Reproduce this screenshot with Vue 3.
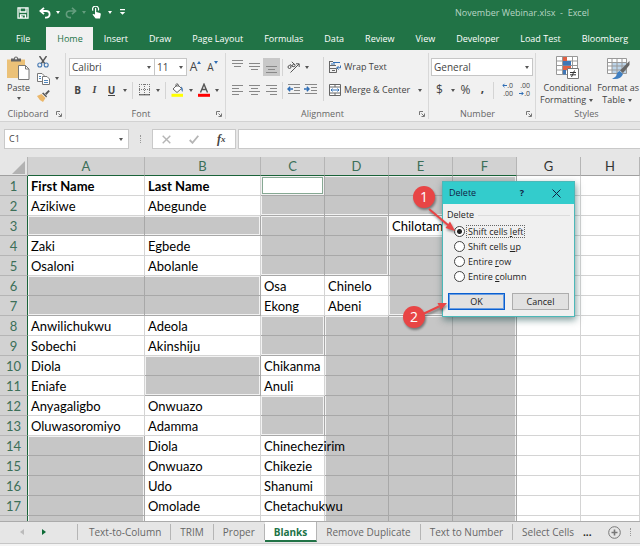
<script setup>
import { ref } from 'vue';

// ---------------------------------------
// ribbon

const tabs = ['File', 'Home', 'Insert', 'Draw', 'Page Layout', 'Formulas', 'Data', 'Review', 'View', 'Developer', 'Load Test', 'Bloomberg']
const activeTab = ref('Home')

const alignTop = [
  { name: 'Top Align', d: 'M0 1.5H11M0 4.5H11M2 7.5H9', cls: 'up' },
  { name: 'Middle Align', d: 'M0 3.5H11M0 6.5H11M2 9.5H9', cls: '' },
  { name: 'Bottom Align', d: 'M0 6.5H11M2 9.5H9M0 12.5H11', cls: 'pressed' },
]
const alignText = [
  { name: 'Align Left', d: 'M0 2.5H11M0 5.5H7M0 8.5H11M0 11.5H7' },
  { name: 'Center', d: 'M0 2.5H11M2 5.5H9M0 8.5H11M2 11.5H9' },
  { name: 'Align Right', d: 'M0 2.5H11M4 5.5H11M0 8.5H11M4 11.5H11' },
]

const fontName = ref('Calibri')
const fontSize = ref('11')
const numberFormat = ref('General')
const nameBox = ref('C1')
const formula = ref('')

// ---------------------------------------
// sheet

const columns = ['A', 'B', 'C', 'D', 'E', 'F', 'G', 'H']

const rows = [
  ['First Name', 'Last Name'],
  ['Azikiwe', 'Abegunde'],
  ['', '', '', '', 'Chilotam'],
  ['Zaki', 'Egbede'],
  ['Osaloni', 'Abolanle'],
  ['', '', 'Osa', 'Chinelo'],
  ['', '', 'Ekong', 'Abeni'],
  ['Anwilichukwu', 'Adeola'],
  ['Sobechi', 'Akinshiju'],
  ['Diola', '', 'Chikanma'],
  ['Eniafe', '', 'Anuli'],
  ['Anyagaligbo', 'Onwuazo'],
  ['Oluwasoromiyo', 'Adamma'],
  ['', 'Diola', 'Chinechezirim'],
  ['', 'Onwuazo', 'Chikezie'],
  ['', 'Udo', 'Shanumi'],
  ['', 'Omolade', 'Chetachukwu'],
  [],
]

// selected blank areas: first column, first row, last column, last row
const areas = [
  [2, 1, 5, 2],
  [0, 3, 1, 3],
  [2, 3, 3, 5],
  [5, 3, 5, 3],
  [4, 4, 5, 7],
  [0, 6, 1, 7],
  [2, 8, 2, 9],
  [3, 8, 5, 19],
  [1, 10, 1, 11],
  [2, 12, 2, 13],
  [0, 14, 0, 19],
]

const cellClass = (c, r) => {
  const a = areas.find(([c1, r1, c2, r2]) => c >= c1 && c <= c2 && r >= r1 && r <= r2)
  if (!a) return ''
  return {
    sel: true,
    active: c === 2 && r === 1,
    'edge-l': c === a[0],
    'edge-t': r === a[1],
    'edge-r': c === a[2],
    'edge-b': r === a[3],
  }
}

// ---------------------------------------
// delete dialog

const shift = ref('left')
const options = [
  { id: 'left', pre: 'Shift cells ', key: 'l', post: 'eft' },
  { id: 'up', pre: 'Shift cells ', key: 'u', post: 'p' },
  { id: 'row', pre: 'Entire ', key: 'r', post: 'ow' },
  { id: 'column', pre: 'Entire ', key: 'c', post: 'olumn' },
]

const sheets = ['Text-to-Column', 'TRIM', 'Proper', 'Blanks', 'Remove Duplicate', 'Text to Number', 'Select Cells']
const activeSheet = ref('Blanks')
</script>

<template>
  <div class="excel">
    <header class="titlebar">
      <div class="quick">
        <button aria-label="Save">
          <svg width="12" height="12" viewBox="0 0 12 12" fill="none" stroke="#fff"><path d="M1 .8H11V11.2H1ZM3 1V5H9V1M3.5 11V7.8H8.5V11M5 9V11" stroke-width="1.3" /></svg>
        </button>
        <button aria-label="Undo">
          <svg width="12" height="12" viewBox="0 0 12 12" fill="none" stroke="#fff" stroke-width="1.8"><path d="M5 .8L1.4 4L5 7.2M1.6 4H7Q10.6 4 10.6 7.2T7 10.6H6" /></svg>
        </button>
        <i class="arrow light"></i>
        <button class="faded" aria-label="Redo">
          <svg width="12" height="12" viewBox="0 0 12 12" fill="none" stroke="#fff" stroke-width="1.6"><path d="M7 .8L10.6 4L7 7.2M10.4 4H5Q1.4 4 1.4 7.2T5 10.6H6" /></svg>
        </button>
        <i class="arrow light faded"></i>
        <button aria-label="Touch/Mouse Mode">
          <svg width="12" height="13" viewBox="0 0 12 13"><path d="M4 5V2.2Q4.6 1.4 5.2 2.2V6L9 7Q10 7.4 9.8 8.5L9 12.5H4.6L1.5 8.6Q2 7.4 4 8.6Z" fill="#fff" /><path d="M2 4.6A3 3 0 1 1 7.3 4.4" fill="none" stroke="#fff" stroke-width="1.2" /></svg>
        </button>
        <i class="arrow light"></i>
        <button aria-label="Customize Quick Access Toolbar">
          <svg width="7" height="7" viewBox="0 0 7 7" fill="#fff"><path d="M1 0H6V1.2H1ZM.8 3H6.2L3.5 5.8Z" /></svg>
        </button>
      </div>
      <div class="title">November Webinar.xlsx&nbsp; -&nbsp; Excel</div>
    </header>

    <nav class="tabs">
      <button v-for="t in tabs" :key="t" :class="{ on: t === activeTab }" @click="activeTab = t">{{ t }}</button>
    </nav>

    <section class="ribbon">
      <div class="group clipboard">
        <div class="tools">
          <button class="big">
            <svg width="23" height="24" viewBox="0 0 23 24">
              <path d="M0 3.5H18V22H0Z" fill="#ebc178" />
              <path d="M4 5.5V2.5H7Q7 .5 9 .5T11 2.5H14V5.5Z" fill="#646464" /><circle cx="9" cy="2.6" r="1" fill="#f1f1f1" />
              <path d="M11.5 9.5H18.5L22 13V23.5H11.5Z" fill="#fff" stroke="#777" /><path d="M18.5 9.5V13H22" fill="none" stroke="#777" />
            </svg>
            <span>Paste</span>
            <i class="arrow"></i>
          </button>
          <div class="small">
            <button aria-label="Cut">
              <svg width="12" height="12" viewBox="0 0 12 12" fill="none"><path d="M2.5 0L8 8M9.5 0L4 8" stroke="#555" stroke-width="1.4" /><circle cx="2.8" cy="9" r="2" stroke="#4679b2" stroke-width="1.1" /><circle cx="9.2" cy="9" r="2" stroke="#4679b2" stroke-width="1.1" /></svg>
            </button>
            <button aria-label="Copy">
              <svg width="13" height="12" viewBox="0 0 13 12" fill="#fff" stroke="#777"><path d="M.5 .5H5L7 2.5V8.5H.5Z" /><path d="M5.5 3.5H10L12.5 6V11.5H5.5Z" /><path d="M2 3.5H4M2 5.5H4M7 7.5H11M7 9.5H11" stroke="#4f86bd" /></svg>
              <i class="arrow"></i>
            </button>
            <button aria-label="Format Painter">
              <svg width="13" height="12" viewBox="0 0 13 12"><path d="M0 6L4.5 4L8.5 8L6 12Q2 10 0 6Z" fill="#ebb76a" /><path d="M5 3.2L9.3 7.5L10 6.2L6.4 2.5Z" fill="#555" /><path d="M8 3.5L11.5 0L12.8 1.3L9.4 5Z" fill="#555" /></svg>
            </button>
          </div>
        </div>
        <footer><span>Clipboard</span><svg class="launch" width="6" height="6" viewBox="0 0 6 6"><path d="M.5 4V.5H4M2.5 2.5L5 5M5.5 2.5V5.5H2.5" /></svg></footer>
      </div>

      <div class="group font">
        <div class="tools column">
          <div class="line">
            <label class="combo face"><select v-model="fontName" aria-label="Font"><option>Calibri</option></select><i class="arrow"></i></label>
            <label class="combo size"><select v-model="fontSize" aria-label="Font Size"><option>11</option></select><i class="arrow"></i></label>
            <button class="grow" aria-label="Increase Font Size">A<svg width="4" height="3" viewBox="0 0 4 3"><path d="M0 3L2 0L4 3Z" fill="#2f6eb5" /></svg></button>
            <button class="grow less" aria-label="Decrease Font Size">A<svg width="4" height="3" viewBox="0 0 4 3"><path d="M0 0L2 3L4 0Z" fill="#2f6eb5" /></svg></button>
          </div>
          <div class="line">
            <button class="ic"><b>B</b></button>
            <button class="ic"><em>I</em></button>
            <button class="ic"><b class="under">U</b></button>
            <i class="arrow"></i>
            <i class="sep"></i>
            <button class="ic" aria-label="Borders">
              <svg width="12" height="12" viewBox="0 0 12 12" fill="none" stroke="#777"><path d="M.5 0V11M5.5 0V11M10.5 0V11M0 .5H11M0 5.5H11" stroke-dasharray="1 1" /><path d="M0 10.8H11" stroke="#444" /></svg>
            </button>
            <i class="arrow"></i>
            <i class="sep"></i>
            <button class="ic" aria-label="Fill Color">
              <svg width="13" height="14" viewBox="0 0 13 14"><path d="M2 6L6.5 1.5L10.5 5.5L6 9.5Z" fill="#fff" stroke="#666" /><path d="M5 4V1.5Q6 -.5 7 1.5V4" fill="none" stroke="#666" /><path d="M10 3.5Q12.8 5 11.5 9Q10.5 8 10 5.5Z" fill="#4679b2" /><path d="M.5 10.8H12V13.8H.5Z" fill="#ff0" /></svg>
            </button>
            <i class="arrow"></i>
            <button class="ic" aria-label="Font Color">
              <svg width="12" height="14" viewBox="0 0 12 14"><path d="M2.5 9.5L6 1.2L9.5 9.5M3.8 6.5H8.2" fill="none" stroke="#555" stroke-width="1.4" /><path d="M0 10.8H12V13.8H0Z" fill="#f00" /></svg>
            </button>
            <i class="arrow"></i>
          </div>
        </div>
        <footer><span>Font</span><svg class="launch" width="6" height="6" viewBox="0 0 6 6"><path d="M.5 4V.5H4M2.5 2.5L5 5M5.5 2.5V5.5H2.5" /></svg></footer>
      </div>

      <div class="group alignment">
        <div class="tools">
          <div class="column left">
            <div class="line">
              <button v-for="a in alignTop" :key="a.name" class="ic" :class="a.cls" :aria-label="a.name">
                <svg width="11" height="14" viewBox="0 0 11 14"><path :d="a.d" fill="none" stroke="#888" /></svg>
              </button>
              <i class="sep tall"></i>
              <button class="ic" aria-label="Orientation">
                <svg width="13" height="12" viewBox="0 0 13 12" fill="none" stroke="#555"><path d="M3.5 11.5L12 3M9 2.8H12.2V6" /><circle cx="2.5" cy="6" r="1.5" /><path d="M3 3.2L5.8 6M4.8 .8L8 4" /><circle cx="6.8" cy="4.4" r="1.3" /></svg>
              </button>
              <i class="arrow"></i>
            </div>
            <div class="line">
              <button v-for="a in alignText" :key="a.name" class="ic" :aria-label="a.name">
                <svg width="11" height="14" viewBox="0 0 11 14"><path :d="a.d" fill="none" stroke="#888" /></svg>
              </button>
              <i class="sep tall"></i>
              <button class="ic" aria-label="Decrease Indent">
                <svg width="13" height="12" viewBox="0 0 13 12" fill="none" stroke="#888"><path d="M1 .5H13M7 3.5H13M7 6.5H13M1 9.5H13" /><path d="M1 5H6M3.2 2.8L1 5L3.2 7.2" stroke="#2f6eb5" stroke-width="1.4" /></svg>
              </button>
              <button class="ic" aria-label="Increase Indent">
                <svg width="13" height="12" viewBox="0 0 13 12" fill="none" stroke="#888"><path d="M1 .5H13M7 3.5H13M7 6.5H13M1 9.5H13" /><path d="M0 5H5M2.8 2.8L5 5L2.8 7.2" stroke="#2f6eb5" stroke-width="1.4" /></svg>
              </button>
            </div>
          </div>
          <i class="sep full"></i>
          <div class="column right">
            <button class="text">
              <svg width="13" height="12" viewBox="0 0 13 12" fill="none" stroke="#666"><path d="M.5 0V12M.5 .5H4M.5 4.5H7M.5 7.5H7.5V11.5H.5M3 9.5H6" /><path d="M4 1.5H11M2 3H6M11.5 4.5V6.8H8M9.6 5L7.8 6.8L9.6 8.6" stroke="#2f6eb5" /></svg>
              <span>Wrap Text</span>
            </button>
            <button class="text">
              <svg width="13" height="12" viewBox="0 0 13 12" fill="#fff" stroke="#666"><path d="M.5 .5H11.5V11.5H.5ZM.5 3H11.5M.5 9H11.5M6 .5V3M6 9V11.5" /><path d="M2 6H10M3.5 4.5L2 6L3.5 7.5M8.5 4.5L10 6L8.5 7.5" fill="none" stroke="#2f6eb5" /></svg>
              <span>Merge &amp; Center</span>
              <i class="arrow"></i>
            </button>
          </div>
        </div>
        <footer><span>Alignment</span><svg class="launch" width="6" height="6" viewBox="0 0 6 6"><path d="M.5 4V.5H4M2.5 2.5L5 5M5.5 2.5V5.5H2.5" /></svg></footer>
      </div>

      <div class="group number">
        <div class="tools column">
          <div class="line">
            <label class="combo format"><select v-model="numberFormat" aria-label="Number Format"><option>General</option></select><i class="arrow"></i></label>
          </div>
          <div class="line">
            <button class="ic sign">$</button>
            <i class="arrow"></i>
            <button class="ic sign">%</button>
            <button class="ic comma">,</button>
            <i class="sep tall"></i>
            <button class="ic dec" aria-label="Increase Decimal"><span><svg width="5" height="5" viewBox="0 0 5 5"><path d="M5 2.5H1M2.5 .8L.8 2.5L2.5 4.2" /></svg>.0</span><span>.00</span></button>
            <button class="ic dec" aria-label="Decrease Decimal"><span>.00</span><span><svg width="5" height="5" viewBox="0 0 5 5"><path d="M0 2.5H4M2.5 .8L4.2 2.5L2.5 4.2" /></svg>.0</span></button>
          </div>
        </div>
        <footer><span>Number</span><svg class="launch" width="6" height="6" viewBox="0 0 6 6"><path d="M.5 4V.5H4M2.5 2.5L5 5M5.5 2.5V5.5H2.5" /></svg></footer>
      </div>

      <div class="group styles">
        <div class="tools">
          <button class="big">
            <svg width="23" height="24" viewBox="0 0 23 24">
              <path d="M.5 .5H21.5V18.5H.5ZM.5 5H21.5M.5 9.5H21.5M.5 14H21.5M6.5 .5V18.5M16.5 .5V18.5" fill="#fff" stroke="#999" />
              <path d="M7 1H11V5H7ZM7 10H15V14H7Z" fill="#e06043" /><path d="M7 5H15V9.5H7ZM7 14H10V18.5H7Z" fill="#3f76b5" />
              <path d="M11.5 12.5H22.5V22.5H11.5Z" fill="#fff" stroke="#777" /><path d="M14 16.5H20M14 18.8H20M18.5 14.5L15.5 21" stroke="#333" fill="none" />
            </svg>
            <span>Conditional</span>
            <span>Formatting<i class="arrow"></i></span>
          </button>
          <button class="big">
            <svg width="23" height="24" viewBox="0 0 23 24">
              <path d="M.5 2.5H19.5V17.5H.5Z" fill="#fff" /><path d="M5 6H19.5V17.5H5Z" fill="#bdd5ea" />
              <path d="M.5 2.5H19.5V17.5H.5ZM.5 6.5H19.5M.5 10H19.5M.5 14H19.5M5 2.5V17.5M10 2.5V17.5M15 2.5V17.5" fill="none" stroke="#999" />
              <path d="M22.5 5V9L16 17L13 14.5Z" fill="#666" /><path d="M12.5 15L16 18Q14 24 5 22.8Q9.5 21 9.5 18.5Q10 16 12.5 15Z" fill="#3f7fc1" />
            </svg>
            <span>Format as</span>
            <span>Table<i class="arrow"></i></span>
          </button>
        </div>
        <footer><span>Styles</span></footer>
      </div>
    </section>

    <section class="formula-bar">
      <label class="box name"><input v-model="nameBox" type="text" aria-label="Name Box"><i class="arrow"></i></label>
      <i class="dots"></i>
      <div class="box fx">
        <button aria-label="Cancel entry"><svg width="9" height="9" viewBox="0 0 9 9" fill="none" stroke="#b5b5b5" stroke-width="1.4"><path d="M.7 .7L8.3 8.3M8.3 .7L.7 8.3" /></svg></button>
        <button aria-label="Enter"><svg width="10" height="9" viewBox="0 0 10 9" fill="none" stroke="#b5b5b5" stroke-width="1.8"><path d="M.7 5L3.5 7.8L9.3 .8" /></svg></button>
        <button class="fn" aria-label="Insert Function">f<small>x</small></button>
      </div>
      <input v-model="formula" class="box formula" type="text" aria-label="Formula Bar">
    </section>

    <main class="sheet">
      <table>
        <colgroup>
          <col class="w-head"><col class="w-a"><col class="w-b">
          <col v-for="n in 5" :key="n" class="w-c">
          <col>
        </colgroup>
        <thead>
          <tr>
            <th class="corner"><svg width="13" height="13" viewBox="0 0 13 13"><path d="M13 0V13H0Z" fill="#b2b2b2" /></svg></th>
            <th v-for="(c, i) in columns" :key="c" :class="{ picked: i < 6 }">{{ c }}</th>
          </tr>
        </thead>
        <tbody>
          <tr v-for="(row, r) in rows" :key="r">
            <th>{{ r < 17 ? r + 1 : '' }}</th>
            <td v-for="(c, i) in columns" :key="c" :class="[cellClass(i, r + 1), { bold: r === 0 }]">{{ row[i] }}</td>
          </tr>
        </tbody>
      </table>
    </main>

    <nav class="sheets">
      <button class="nav" aria-label="Previous sheet"><svg width="4" height="6" viewBox="0 0 4 6"><path d="M4 0V6L0 3Z" fill="#bbb" /></svg></button>
      <button class="nav" aria-label="Next sheet"><svg width="4" height="6" viewBox="0 0 4 6"><path d="M0 0V6L4 3Z" fill="#0e6b37" /></svg></button>
      <div class="list">
        <button v-for="s in sheets" :key="s" class="tab" :class="{ on: s === activeSheet }" @click="activeSheet = s">{{ s }}</button>
      </div>
      <span class="more">...</span>
      <button class="add" aria-label="New sheet"><svg width="13" height="13" viewBox="0 0 13 13" fill="none" stroke="#777"><circle cx="6.5" cy="6.5" r="5.8" /><path d="M3.5 6.5H9.5M6.5 3.5V9.5" stroke-width="1.6" /></svg></button>
      <i class="dots"></i>
    </nav>

    <form class="dialog" @submit.prevent>
      <header>
        <span>Delete</span>
        <button type="button" aria-label="Help">?</button>
        <button type="button" aria-label="Close"><svg width="9" height="9" viewBox="0 0 9 9" fill="none" stroke="#124"><path d="M.5 .5L8.5 8.5M8.5 .5L.5 8.5" /></svg></button>
      </header>
      <div class="caption">Delete</div>
      <div class="options">
        <label v-for="o in options" :key="o.id">
          <input v-model="shift" type="radio" name="shift" :value="o.id">
          <span :class="{ focus: o.id === shift }">{{ o.pre }}<u>{{ o.key }}</u>{{ o.post }}</span>
        </label>
      </div>
      <div class="actions">
        <button class="ok">OK</button>
        <button type="button">Cancel</button>
      </div>
    </form>

    <svg class="notes" width="60" height="150" viewBox="0 0 60 150">
      <g class="drop">
        <path d="M28 26L47 42" /><path class="tip" d="M54 48L44.5 45L49 38.5Z" />
        <path d="M22 131L38 123.5" /><path class="tip" d="M46 120L40 127L36.5 120Z" />
        <circle cx="23" cy="14" r="11" />
        <circle cx="13" cy="134" r="11" />
      </g>
      <text x="23" y="19">1</text>
      <text x="13" y="139">2</text>
    </svg>
  </div>
</template>

<style>
body {
  margin: 0;
}
</style>

<style scoped>
.excel {
  position: relative;
  display: flex;
  flex-direction: column;
  height: 100vh;
  overflow: hidden;
  background: #e6e6e6;
  color: #444;
  font: 9px/12px "Open Sans", "Noto Sans", sans-serif;
}
.excel * {
  box-sizing: border-box;
}
button, input, select {
  margin: 0;
  padding: 0;
  border: none;
  background: none;
  color: inherit;
  font: inherit;
}
button {
  display: flex;
  align-items: center;
  justify-content: center;
  white-space: nowrap;
}
input[type="text"]:focus, select:focus {
  outline: none;
}
svg {
  flex: none;
}

.arrow {
  flex: none;
  display: inline-flex;
  align-items: center;
  justify-content: center;
  width: 9px;
}
.arrow::before {
  content: "";
  border: 2px solid transparent;
  border-top: 3px solid #555;
  border-bottom: none;
}
.arrow.light::before {
  border-top-color: #fff;
}
.faded {
  opacity: 0.3;
}

/* title */
.titlebar {
  flex: none;
  display: flex;
  align-items: center;
  justify-content: space-between;
  height: 27px;
  padding: 0 51px 2px 16px;
  background: #217346;
  color: #b8d5c5;
}
.quick {
  display: flex;
  align-items: center;
}
.quick button {
  width: 13px;
}
.quick button + button {
  margin-left: 9px;
}
.quick .arrow {
  width: 13px;
}

/* tabs */
.tabs {
  flex: none;
  display: flex;
  height: 23px;
  background: #217346;
  color: #fff;
}
.tabs button {
  padding: 0 10px 0 11px;
}
.tabs button:first-child {
  padding: 0 16px;
}
.tabs .on {
  background: #f1f1f1;
  color: #217346;
}

/* ribbon */
.ribbon {
  flex: none;
  display: flex;
  height: 72px;
  padding-top: 3px;
  background: #f1f1f1;
  border-bottom: 1px solid #d2d2d2;
}
.group {
  display: flex;
  flex-direction: column;
  border-right: 1px solid #d8d8d8;
  margin-bottom: 2px;
}
.group footer {
  display: flex;
  align-items: center;
  height: 11px;
  padding-right: 3px;
  color: #666;
}
.group footer span {
  flex: 1;
  text-align: center;
}
.launch {
  fill: none;
  stroke: #777;
}
.tools {
  display: flex;
  flex: 1;
}
.column {
  display: flex;
  flex-direction: column;
  gap: 3px;
  padding-top: 4px;
}
.line {
  display: flex;
  align-items: center;
  height: 20px;
}
.ic {
  flex: none;
  width: 17px;
  height: 18px;
}
.ic.up {
  padding-bottom: 3px;
}
.pressed {
  background: #c8c8c8;
}
.sep {
  flex: none;
  width: 1px;
  height: 17px;
  margin: 0 3px;
  background: #d4d4d4;
}
.sep.tall {
  margin: 0 2px;
}
.sep.full {
  height: 44px;
  margin: 4px 5px 0 3px;
}
.big {
  flex-direction: column;
  justify-content: flex-start;
  padding-top: 3px;
}
.big > span {
  display: flex;
}
.big > svg {
  margin-bottom: 2px;
}
.clipboard {
  width: 66px;
}
.clipboard .big {
  width: 37px;
}
.clipboard .big > .arrow {
  height: 9px;
}
.small button {
  height: 17px;
}
.small .arrow {
  width: 14px;
}
.font {
  width: 160px;
}
.font .tools {
  padding-left: 3px;
}
.combo {
  display: flex;
  align-items: center;
  height: 18px;
  border: 1px solid #c6c6c6;
  background: #fff;
}
.combo select {
  flex: 1;
  min-width: 0;
  padding-left: 2px;
  appearance: none;
  font-size: 10px;
}
.face {
  width: 86px;
}
.size {
  width: 33px;
  margin-left: -1px;
}
.combo .arrow {
  width: 11px;
}
.grow {
  align-items: flex-start;
  width: 17px;
  font-size: 12px;
}
.less {
  font-size: 10px;
}
.ic b, .ic em {
  font-size: 10px;
}
.ic em {
  font-family: "Liberation Serif", serif;
  font-weight: bold;
}
.under {
  border-bottom: 1px solid #444;
  line-height: 10px;
}
.alignment {
  width: 203px;
}
.alignment .tools {
  padding-left: 3px;
}
.left {
  width: 91px;
}
.text {
  justify-content: flex-start;
  gap: 2px;
  height: 20px;
}
.text .arrow {
  margin-left: 3px;
}
.number {
  width: 107px;
}
.number .tools {
  padding-left: 2px;
}
.format {
  width: 102px;
}
.sign {
  font-size: 12px;
}
.comma {
  padding-bottom: 4px;
  font-size: 12px;
  font-weight: bold;
}
.dec {
  flex-direction: column;
  align-items: flex-end;
  font-size: 7px;
  line-height: 8px;
}
.dec svg {
  fill: none;
  stroke: #2f6eb5;
}
.styles {
  flex: 1;
  border-right: none;
}
.styles .tools {
  gap: 2px;
  padding-left: 4px;
}

/* formula bar */
.formula-bar {
  flex: none;
  display: flex;
  height: 35px;
  padding: 7px 0 8px 4px;
}
.box {
  display: flex;
  align-items: center;
  border: 1px solid #c9c9c9;
  background: #fff;
}
.name {
  width: 125px;
  padding: 0 3px 0 4px;
}
.name input {
  flex: 1;
  min-width: 0;
}
.dots {
  align-self: center;
  width: 1px;
  height: 8px;
  margin: 0 11px;
  border-left: 1px dotted #999;
}
.fx {
  width: 84px;
}
.fx button {
  width: 28px;
}
.fx .fn {
  font: italic bold 12px "Liberation Serif", serif;
}
.fn small {
  font-size: 9px;
}
.formula {
  flex: 1;
  margin-left: 2px;
  padding: 0 4px;
  border-right: none;
}

/* sheet */
.sheet {
  flex: 1;
  min-height: 0;
  overflow: hidden;
  background: #fff;
}
table {
  width: 100%;
  table-layout: fixed;
  border-collapse: separate;
  border-spacing: 0;
  font: 13px/18px Lato, sans-serif;
}
.w-head {
  width: 28px;
}
.w-a {
  width: 117px;
}
.w-b {
  width: 116px;
}
.w-c {
  width: 64px;
}
th {
  padding: 0;
  font-weight: normal;
}
thead th {
  height: 19px;
  background: #e6e6e6;
  border-right: 1px solid #b5b5b5;
  border-bottom: 1px solid #a0a0a0;
  color: #333;
}
thead .picked {
  background: #d2d2d2;
  border-bottom-color: #1a6339;
  color: #3c6f58;
}
.corner svg {
  display: block;
  margin: 2px 2px 0 auto;
}
tbody th {
  background: #d2d2d2;
  border-right: 1px solid #1a6339;
  border-bottom: 1px solid #b5b5b5;
  color: #3c6f58;
}
td {
  height: 20px;
  padding: 0 0 0 3px;
  border-right: 1px solid #d4d4d4;
  border-bottom: 1px solid #d4d4d4;
  color: #000;
  white-space: nowrap;
}
td.bold {
  font-weight: bold;
}
.sel {
  --l: 0 0 #fff;
  --t: 0 0 #fff;
  --r: 0 0 #fff;
  --b: 0 0 #fff;
  background: #c6c6c6;
  border-color: #a8a8a8;
  box-shadow: inset var(--l), inset var(--t), inset var(--r), inset var(--b);
}
.edge-l {
  --l: 1px 0 #f2f2f2;
}
.edge-t {
  --t: 0 1px #f2f2f2;
}
.edge-r {
  --r: -1px 0 #f2f2f2;
}
.edge-b {
  --b: 0 -1px #f2f2f2;
}
.active {
  background: #fff;
  box-shadow: inset 0 0 0 1px #f2f2f2, inset 0 0 0 2px #86a893;
}

/* sheet tabs */
.sheets {
  flex: none;
  display: flex;
  align-items: center;
  height: 25px;
  padding: 0 0 4px 11px;
  border-top: 1px solid #ababab;
  box-shadow: inset 0 -2px #f4f4f4, inset 0 -3px #c6c6c6;
  color: #666;
  font-size: 10px;
}
.nav {
  flex: none;
  width: 22px;
}
.list {
  flex: none;
  display: flex;
  align-items: center;
  height: 20px;
  margin-left: 22px;
}
.tab {
  flex: none;
  height: 16px;
  padding: 0 9px;
  border-right: 1px solid #b5b5b5;
}
.tab:first-child {
  padding-left: 11px;
  border-left: 1px solid #b5b5b5;
}
.tab:last-child {
  border-right: none;
}
.tab.on {
  height: 20px;
  padding-top: 2px;
  background: #fff;
  border-bottom: 2px solid #217346;
  color: #217346;
  font-weight: bold;
}
.more {
  color: #222;
  font-weight: bold;
}
.add {
  margin-left: auto;
}
.sheets .dots {
  margin: 0 9px;
}

/* dialog */
.dialog {
  position: absolute;
  left: 442px;
  top: 181px;
  width: 133px;
  background: #f0f0f0;
  border: 1px solid #4cb8b8;
  box-shadow: 1px 3px 7px rgba(0, 60, 60, 0.5);
  color: #222;
}
.dialog header {
  display: flex;
  align-items: center;
  height: 22px;
  padding: 0 12px 0 6px;
  background: #33cccc;
  color: #124;
}
.dialog header span {
  flex: 1;
}
.dialog header button {
  width: 12px;
  font-weight: bold;
}
.dialog header button + button {
  margin-left: 22px;
}
.caption {
  display: flex;
  align-items: center;
  gap: 4px;
  padding: 5px 4px 3px;
}
.caption::after {
  content: "";
  flex: 1;
  height: 1px;
  background: #dcdcdc;
}
.options label {
  display: flex;
  align-items: center;
  gap: 2px;
  height: 15px;
  padding-left: 11px;
}
.options input {
  appearance: none;
  width: 11px;
  height: 11px;
  border: 1px solid #444;
  border-radius: 50%;
  background: #fff;
}
.options input:checked {
  background: radial-gradient(circle, #222 2px, #fff 3px);
}
.options span {
  padding: 0 1px;
  line-height: 11px;
}
.options .focus {
  outline: 1px dotted #666;
}
.actions {
  display: flex;
  gap: 7px;
  padding: 9px 5px 6px;
}
.actions button {
  flex: 1;
  height: 17px;
  background: #e1e1e1;
  border: 1px solid #adadad;
}
.actions .ok {
  border: 1px solid #0a5fd0;
  box-shadow: inset 0 0 0 1px #6a9de0;
}

/* numbered callouts */
.notes {
  position: absolute;
  left: 401px;
  top: 183px;
}
.notes circle, .tip {
  fill: #e84545;
}
.notes path {
  stroke: #e84545;
  stroke-width: 2;
}
.notes .tip {
  stroke: none;
}
.drop {
  filter: drop-shadow(1px 2px 1px rgba(0, 0, 0, 0.4));
}
.notes text {
  fill: #fff;
  font: 14px "Open Sans", sans-serif;
  text-anchor: middle;
}
</style>
